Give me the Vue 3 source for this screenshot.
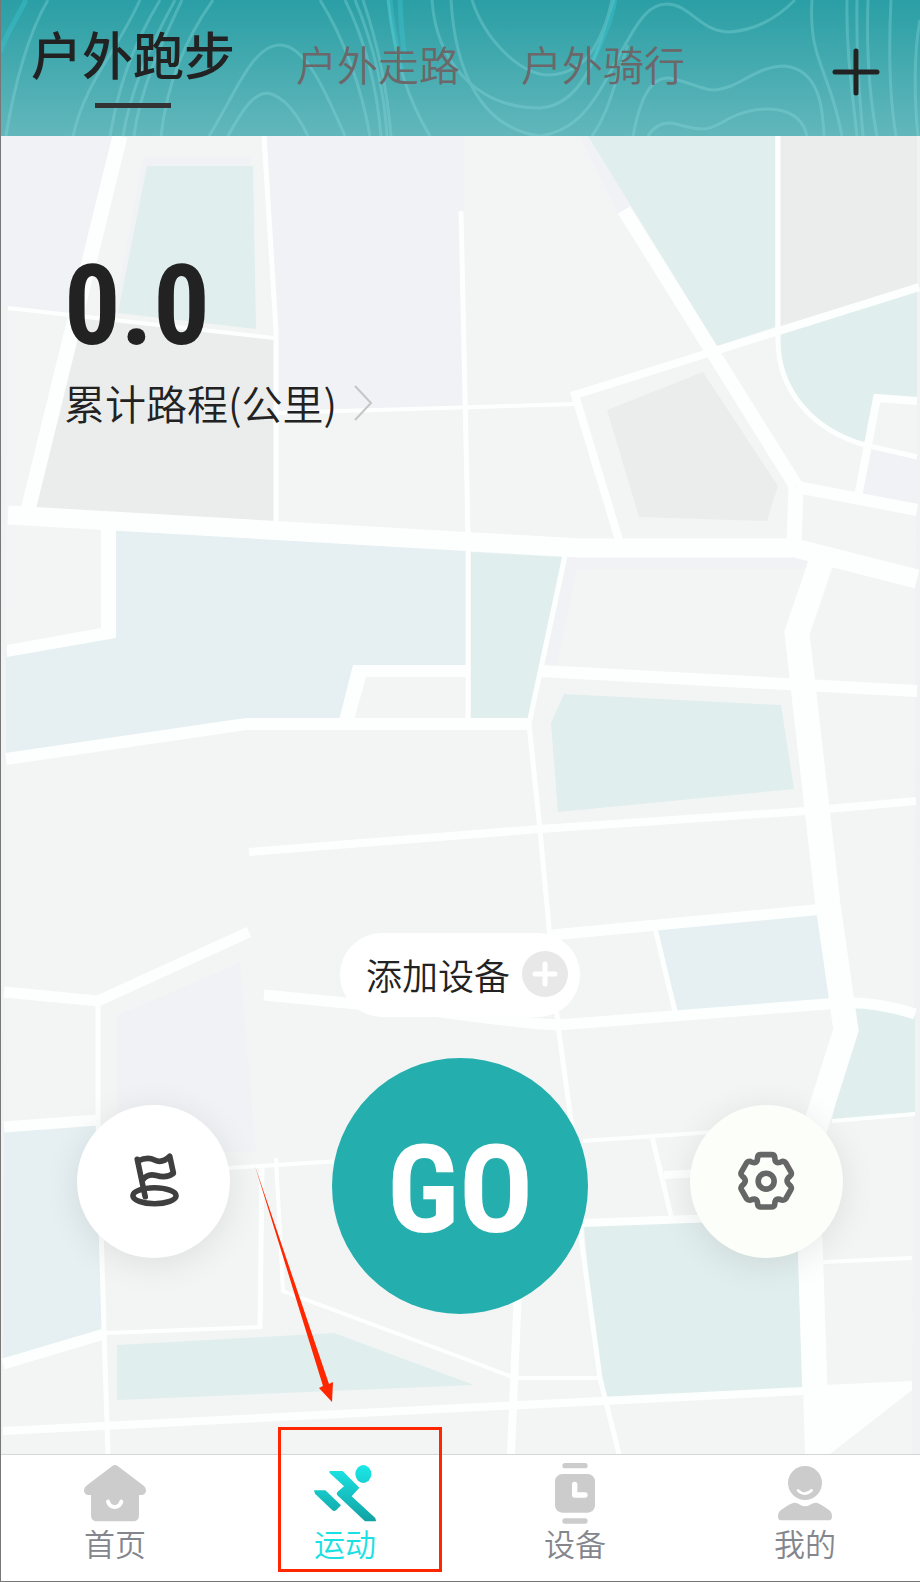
<script setup>
import { ref } from 'vue'

const sports = ['户外跑步', '户外走路', '户外骑行']
const sport = ref(sports[0])

const tabs = [
  { id: 'home', label: '首页' },
  { id: 'sport', label: '运动' },
  { id: 'device', label: '设备' },
  { id: 'me', label: '我的' },
]
const tab = ref('sport')

const water = [
  '147,166 253,166 256,329 118,313',
  '588,136 775,136 775,327 717,346',
  '471,552 562,557 528,718 471,718',
  '564,694 781,705 794,789 558,812 551,723',
  '856,1005 915,1016 915,1112 832,1120',
  '584,1225 797,1217 802,1389 606,1398 600,1378 590,1300',
  '117,1345 334,1333 474,1385 117,1400',
]
const blue = [
  '116,528 466,548 466,668 353,668 340,722 246,722 6,757 6,654 116,634',
  '657,929 819,913 829,999 678,1012',
  '4,1129 96,1122 102,1331 3,1362',
]
const grey = [
  '74,318 274,339 274,523 34,508',
  '780,136 917,136 917,287 780,330',
  '607,410 703,372 778,486 767,521 639,517',
]
const haze = [
  '0,136 119,136 75,316 8,308 0,308',
  '143,157 250,157 250,170 147,170 118,313 114,313',
  '267,136 464,136 464,407 277,413 277,340',
  '579,136 589,136 632,209 617,212',
  '567,556 795,556 812,560 806,569 577,569 556,668 543,668',
  '872,447 917,456 917,506 861,495',
  '117,1015 240,963 256,1152 117,1152',
]
const corners = [
  '101,526 116,526 116,638 7,657 7,645 101,628',
  '339,720 353,665 466,665 466,677 366,677 354,720',
  '803,1386 912,1381 912,1390 830,1454 805,1454',
]
const roads = [
  { w: 15, d: 'M120 136 28 510M794 545 796 487' },
  { w: 14, d: 'M624 210 796 486' },
  { w: 5, d: 'M264 136 276 330V521M461 211 468 535M468 550V720M778 136V340C778 390 812 430 865 445L917 457M565 556 529 724 540 830 558 1025 572 1128 582 1244 600 1378 619 1454M655 928 675 1012M652 1136 671 1216M98 1002V1120L104 1330 108 1454M262 1168 260 1328' },
  { w: 4, d: 'M8 308 274 338M276 413 575 404M832 1121 915 1114M583 1141 800 1126M823 1262 912 1258M518 1378H600M276 1158 283 1291 460 1357 512 1377M106 1333 262 1327M228 1168 340 1161' },
  { w: 8, d: 'M919 287 575 395 619 540M917 401 877 398 858 497M249 852 540 829 806 811 916 801M664 1175 700 1173M583 1223 800 1215M3 1431 460 1408 803 1391M518 1290 511 1454' },
  { w: 12, d: 'M797 487 917 510M6 759 246 724H529M540 671 917 691' },
  { w: 19, d: 'M8 515 440 540 580 548H795L917 579' },
  { w: 25, d: 'M821 562 797 633 828 905 846 1030 800 1175 810 1240 815 1392' },
  { w: 11, d: 'M552 935 824 909M264 995 440 1012Q530 1024 558 1025L840 1003Q875 1001 915 1014M4 992 98 1001 249 932M4 1127 98 1120M3 1364 104 1334' },
]

const contours = [
  'M48 0C30 30 15 80 6 136', 'M140 0C115 55 86 80 73 136', 'M160 0C130 50 118 90 110 136',
  'M175 0C145 55 130 95 123 136', 'M182 0C158 50 139 95 134 136', 'M213 0C190 32 168 75 161 136',
  'M209 136C235 95 252 45 280 45C305 45 325 90 345 136', 'M228 136C245 105 255 93 268 93C285 97 298 115 308 136',
  'M320 0C345 40 362 90 370 136', 'M345 0C370 50 378 100 381 136', 'M355 0C376 50 385 100 387 136',
  'M363 0C380 50 388 100 391 136', 'M388 0C395 60 408 100 430 136', 'M432 0C436 60 475 108 540 108C580 105 598 60 612 0',
  'M472 0C485 40 520 75 550 75C590 72 600 40 614 0', 'M451 0C455 70 480 128 540 136C585 130 600 90 625 45C640 18 650 4 667 4C690 4 700 32 730 32C760 30 780 15 795 0',
  'M592 136C610 110 612 90 628 45', 'M633 136C640 100 650 76 670 78C700 85 700 90 715 90C740 88 755 66 785 66C820 70 823 110 824 136',
  'M648 136C655 125 665 120 680 125C705 132 710 130 730 118C760 104 800 104 807 136',
  'M812 0C808 60 830 70 842 136', 'M847 0C846 50 852 90 857 136', 'M857 0C856 60 860 100 863 136',
  'M868 0C866 60 870 100 877 136', 'M891 0C888 60 890 100 896 136', 'M920 20C914 50 914 100 918 136',
]
</script>

<template>
  <div class="app">
    <header class="top">
      <svg class="backdrop" viewBox="0 0 920 136" preserveAspectRatio="none" aria-hidden="true">
        <g fill="none" stroke="#8fdde0" stroke-width="3" opacity=".32">
          <path v-for="d in contours" :key="d" :d="d" />
        </g>
        <g fill="none" stroke="#3cc6d2" stroke-width="5" opacity=".4">
          <path d="M26 0C16 20 6 34 0 52M390 0C392 25 397 50 402 70M400 0C401 25 402 40 405 55M615 0C610 25 600 45 590 66" />
        </g>
      </svg>
      <nav class="sports" aria-label="运动类型">
        <button
          v-for="s in sports" :key="s" type="button"
          class="sport" :class="{ active: s === sport }" @click="sport = s"
        >{{ s }}</button>
      </nav>
      <button type="button" class="add" aria-label="添加">
        <svg viewBox="0 0 48 48" width="48" height="48">
          <path d="M24 3V45M3 24H45" stroke="#222" stroke-width="5" stroke-linecap="round" />
        </svg>
      </button>
    </header>

    <main class="stage">
      <svg class="backdrop" viewBox="0 136 920 1318" preserveAspectRatio="none" aria-hidden="true">
        <path fill="#f1f2f4" d="M0 136H920V1454H0Z" />
        <path fill="#f3f5f5" d="M8 136H917L912 1454H3Z" />
        <polygon v-for="p in haze" :key="p" :points="p" fill="#f1f2f5" />
        <polygon v-for="p in water" :key="p" :points="p" fill="#e0eeed" />
        <path fill="#e0eeed" d="M780 331 917 290V400L877 398 864 444C812 430 780 390 780 340Z" />
        <path fill="#f3f5f5" d="M877 400 917 402V456L866 445Z" />
        <polygon v-for="p in blue" :key="p" :points="p" fill="#e6eff1" />
        <polygon v-for="p in grey" :key="p" :points="p" fill="#ebedec" />
        <g fill="none" stroke="#fcfffe" stroke-linejoin="miter">
          <path v-for="r in roads" :key="r.d" :d="r.d" :stroke-width="r.w" />
        </g>
        <polygon v-for="p in corners" :key="p" :points="p" fill="#fcfffe" />
      </svg>

      <section class="summary">
        <strong class="distance">0.0</strong>
        <a class="total" href="#records">
          累计路程(公里)
          <svg viewBox="0 0 20 38" width="20" height="38" aria-hidden="true">
            <path d="M2 3 18 20 2 37" fill="none" stroke="#c4c5c5" stroke-width="2" />
          </svg>
        </a>
      </section>

      <section class="controls">
        <button type="button" class="device">
          添加设备
          <svg viewBox="0 0 46 46" width="46" height="46" aria-hidden="true">
            <circle cx="23" cy="23" r="23" fill="#e8e8e8" />
            <path d="M23 13V33M13 23H33" stroke="#fff" stroke-width="5" stroke-linecap="round" />
          </svg>
        </button>
        <div class="actions">
          <button type="button" class="round" aria-label="目标">
            <svg viewBox="66 59 190 190" width="63" height="63">
              <g fill="none" stroke="#3f3f3f" stroke-width="17" stroke-linecap="round" stroke-linejoin="round">
                <path d="M112 87 136 200M114 92C135 82 150 82 164 89C180 97 196 92 210 78L221 129C205 142 190 142 170 136C150 130 138 135 128 150" />
                <ellipse cx="164" cy="197" rx="65" ry="24" />
              </g>
            </svg>
          </button>
          <button type="button" class="go">GO</button>
          <button type="button" class="round settings" aria-label="设置">
            <svg viewBox="74 60 190 190" width="63" height="63">
              <g fill="none" stroke="#666" stroke-width="17" stroke-linejoin="round">
                <path d="M152 74H184Q193 74 194 83Q194 97 203 98Q210 98 215 95Q223 93 227 99L243 127Q246 134 240 139Q231 146 231 153Q231 160 240 167Q246 172 243 179L227 207Q223 213 215 211Q210 208 203 208Q194 209 194 223Q193 232 184 232H152Q143 232 142 223Q142 209 133 208Q126 208 121 211Q113 213 109 207L93 179Q90 172 96 167Q105 160 105 153Q105 146 96 139Q90 134 93 127L109 99Q113 93 121 95Q126 98 133 98Q142 97 142 83Q143 74 152 74Z" />
                <circle cx="168" cy="154" r="24" />
              </g>
            </svg>
          </button>
        </div>
      </section>
    </main>

    <nav class="tabbar" aria-label="主导航">
      <button
        v-for="t in tabs" :key="t.id" type="button"
        class="tab" :class="{ current: t.id === tab }" @click="tab = t.id"
      >
        <svg v-if="t.id === 'home'" viewBox="69 66 192 192" width="64" height="64" aria-hidden="true">
          <path fill="#ccc" d="M157 78 78 138Q72 143 72 152Q73 164 86 165H93V226Q93 244 111 244H219Q237 244 237 226V165H244Q257 164 258 152Q258 143 252 138L173 78Q165 72 157 78Z" />
          <path d="M144 185Q149 201 164 201Q179 201 184 185" fill="none" stroke="#fff" stroke-width="12" stroke-linecap="round" />
        </svg>
        <svg v-else-if="t.id === 'sport'" viewBox="759 66 192 192" width="64" height="64" aria-hidden="true">
          <defs>
            <linearGradient id="runner" gradientUnits="userSpaceOnUse" x1="880" y1="75" x2="880" y2="244">
              <stop offset="0" stop-color="#1be8e8" />
              <stop offset="1" stop-color="#12a1a3" />
            </linearGradient>
          </defs>
          <g fill="url(#runner)">
            <ellipse cx="910" cy="102" rx="24" ry="27" />
            <path d="M808 93H848L898 143 875 169 945 233Q948 238 948 244H915L832 166Q828 161 832 156L852 139 809 99Z" />
            <path d="M762 151H796L843 196 829 210Q823 215 817 211L765 161Z" />
          </g>
        </svg>
        <svg v-else-if="t.id === 'device'" viewBox="129 66 192 192" width="64" height="64" aria-hidden="true">
          <g fill="#ccc">
            <rect x="187" y="69" width="76" height="16" rx="8" />
            <rect x="165" y="102" width="120" height="116" rx="22" />
            <rect x="187" y="235" width="76" height="16" rx="8" />
          </g>
          <path d="M224 133V165H255" fill="none" stroke="#fff" stroke-width="16" stroke-linecap="round" stroke-linejoin="round" />
        </svg>
        <svg v-else viewBox="819 66 192 192" width="64" height="64" aria-hidden="true">
          <g fill="#ccc">
            <circle cx="915" cy="129" r="51" />
            <path d="M884 188Q892 188 900 194Q915 204 930 194Q940 188 948 188Q958 188 988 211Q996 217 996 230Q996 241 985 241H845Q834 241 834 230Q834 217 843 210Q873 188 884 188Z" />
          </g>
          <path d="M894 151Q914 171 935 151" fill="none" stroke="#fff" stroke-width="8" stroke-linecap="round" />
        </svg>
        <span>{{ t.label }}</span>
        <template v-if="t.id === 'sport'">
          <svg class="pointer" viewBox="254 1166 82 237" width="82" height="237" aria-hidden="true">
            <path fill="#ff2600" d="M255 1166 329 1384 333 1382 332 1402 319 1388 323 1386Z" />
          </svg>
          <i class="marker"></i>
        </template>
      </button>
    </nav>
  </div>
</template>

<style>
body {
  margin: 0;
}
</style>

<style scoped>
.app {
  box-sizing: border-box;
  position: relative;
  display: flex;
  flex-direction: column;
  min-height: 100vh;
  border-bottom: 1px solid #777;
  background: #fff;
  color: #222;
  font-family: "Noto Sans CJK SC", sans-serif;
  font-weight: 350;
}
.app::before {
  position: absolute;
  z-index: 1;
  inset: 0 auto 0 0;
  width: 1px;
  background: #777;
  content: "";
}
button {
  padding: 0;
  border: 0;
  background: none;
  color: inherit;
  font: inherit;
  cursor: pointer;
}
svg {
  display: block;
}
.backdrop {
  position: absolute;
  inset: 0;
  width: 100%;
  height: 100%;
}
.top {
  box-sizing: border-box;
  position: relative;
  display: flex;
  justify-content: space-between;
  align-items: flex-start;
  min-height: 136px;
  padding: 24px 40px 0 31px;
  background: linear-gradient(#2a9fa5, #62b7bb);
}
.sports {
  position: relative;
  display: flex;
  align-items: flex-start;
  gap: 61px;
}
.sport {
  color: #6c6768;
  font-size: 41px;
  line-height: 79px;
}
.sport.active {
  display: flex;
  flex-direction: column;
  align-items: center;
  gap: 21px;
  color: #222;
  font-size: 51px;
  font-weight: 500;
  line-height: 58px;
}
.sport.active::after {
  width: 76px;
  height: 5px;
  background: #333;
  content: "";
}
.add {
  position: relative;
  padding: 24px 0;
}
.stage {
  position: relative;
  flex: 1;
  display: flex;
  flex-direction: column;
  justify-content: space-between;
  overflow: hidden;
}
.summary {
  position: relative;
  display: flex;
  flex-direction: column;
  align-items: flex-start;
  padding: 114px 64px 0;
}
.distance {
  font-family: "Roboto Condensed", Roboto, sans-serif;
  font-size: 112px;
  font-weight: 700;
  line-height: 112px;
}
.total {
  display: flex;
  align-items: center;
  gap: 16px;
  margin-top: 10px;
  color: #222;
  font-size: 41px;
  line-height: 60px;
  text-decoration: none;
}
.controls {
  position: relative;
  display: flex;
  flex-direction: column;
  align-items: center;
  gap: 41px;
  padding-bottom: 140px;
}
.device {
  display: flex;
  align-items: center;
  gap: 12px;
  height: 84px;
  padding: 0 12px 2px 26px;
  border-radius: 42px;
  background: #fff;
  font-size: 36px;
}
.actions {
  box-sizing: border-box;
  display: flex;
  justify-content: space-between;
  align-items: center;
  width: 100%;
  padding: 0 77px;
}
.round {
  display: grid;
  place-items: center;
  width: 153px;
  height: 153px;
  margin-bottom: 10px;
  border-radius: 50%;
  background: #fff;
  box-shadow: 0 6px 36px rgba(0, 0, 0, 0.09);
}
.settings {
  background: #fcfefa;
}
.go {
  width: 256px;
  height: 256px;
  padding-top: 8px;
  border-radius: 50%;
  background: #24aead;
  color: #fff;
  font-family: "Roboto Condensed", Roboto, sans-serif;
  font-size: 123px;
  font-weight: 700;
  line-height: 123px;
}
.tabbar {
  display: grid;
  grid-template-columns: repeat(4, 1fr);
  border-top: 1px solid #d5d7d7;
  background: #fff;
}
.tab {
  position: relative;
  display: flex;
  flex-direction: column;
  align-items: center;
  padding: 7px 0 21px;
  color: #84868d;
  font-size: 31px;
  line-height: 34px;
}
.current {
  color: #1be0e2;
}
.marker {
  box-sizing: border-box;
  position: absolute;
  top: -28px;
  left: 48px;
  width: 164px;
  height: 145px;
  border: 3px solid #ff2600;
}
.pointer {
  position: absolute;
  top: -289px;
  left: 24px;
}
</style>
